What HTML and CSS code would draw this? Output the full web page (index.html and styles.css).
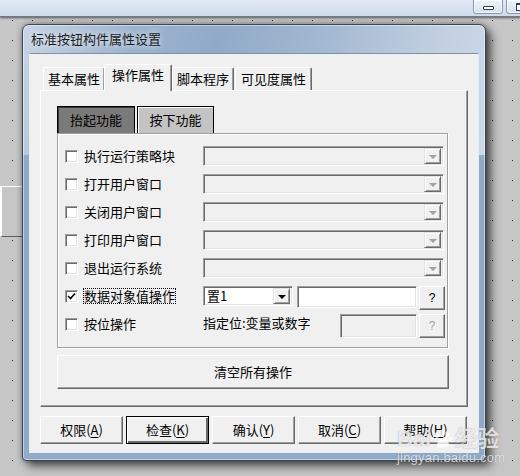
FILE: index.html
```html
<!DOCTYPE html>
<html lang="zh-CN">
<head>
    <meta charset="UTF-8">
    <title>标准按钮构件属性设置</title>
    <link rel="stylesheet" href="styles.css">
</head>
<body>
    <div class="appbar">
        <div class="capbtn"><span class="glyph-min"></span></div>
        <div class="capbtn"><span class="glyph-max"></span></div>
    </div>

    <div class="desk">
        <div class="ghost"></div>

        <div class="dialog">
            <div class="titlebar">标准按钮构件属性设置</div>
            <div class="client">
                <div class="tabs">
                    <div class="tab t1">基本属性</div>
                    <div class="tab t2 active">操作属性</div>
                    <div class="tab t3">脚本程序</div>
                    <div class="tab t4">可见度属性</div>
                </div>

                <div class="page">
                    <div class="subtabs">
                        <div class="subtab pressed">抬起功能</div>
                        <div class="subtab">按下功能</div>
                    </div>

                    <div class="group">
                        <div class="row">
                            <label class="check"><span class="box"></span>执行运行策略块</label>
                            <div class="combo off"><span class="arrow"></span></div>
                        </div>
                        <div class="row">
                            <label class="check"><span class="box"></span>打开用户窗口</label>
                            <div class="combo off"><span class="arrow"></span></div>
                        </div>
                        <div class="row">
                            <label class="check"><span class="box"></span>关闭用户窗口</label>
                            <div class="combo off"><span class="arrow"></span></div>
                        </div>
                        <div class="row">
                            <label class="check"><span class="box"></span>打印用户窗口</label>
                            <div class="combo off"><span class="arrow"></span></div>
                        </div>
                        <div class="row">
                            <label class="check"><span class="box"></span>退出运行系统</label>
                            <div class="combo off"><span class="arrow"></span></div>
                        </div>
                        <div class="row">
                            <label class="check">
                                <span class="box">
                                    <svg width="9" height="9" viewBox="0 0 9 9"><polyline points="1,4 3.5,6.5 8,1.5" fill="none" stroke="#000" stroke-width="1.7"/></svg>
                                </span>
                                <span class="focus">数据对象值操作</span>
                            </label>
                            <div class="combo value"><span class="val">置1</span><span class="arrow on"></span></div>
                            <div class="field"></div>
                            <div class="qbtn">?</div>
                        </div>
                        <div class="row">
                            <label class="check"><span class="box"></span>按位操作</label>
                            <span class="hint">指定位:变量或数字</span>
                            <div class="field dim"></div>
                            <div class="qbtn dim">?</div>
                        </div>
                    </div>

                    <button class="wide">清空所有操作</button>
                </div>

                <div class="actions">
                    <button>权限(<u>A</u>)</button>
                    <button class="default">检查(<u>K</u>)</button>
                    <button>确认(<u>Y</u>)</button>
                    <button>取消(<u>C</u>)</button>
                    <button>帮助(<u>H</u>)</button>
                </div>
            </div>
        </div>

        <div class="watermark">
            <div class="wm-logo">Bai<svg width="22" height="20" viewBox="0 0 22 20"><ellipse cx="5" cy="6" rx="2.2" ry="3" fill="currentColor"/><ellipse cx="10" cy="3.5" rx="2.2" ry="3" fill="currentColor"/><ellipse cx="15.5" cy="5" rx="2.2" ry="3" fill="currentColor"/><ellipse cx="18.5" cy="10" rx="2" ry="2.6" fill="currentColor"/><path d="M5 17 C5 11 9 9 11 9 C14 9 17 12 17 16 C17 19 13 18.5 11 18.5 C8 18.5 5 19.5 5 17 Z" fill="currentColor"/></svg>经验</div>
            <div class="wm-url">jingyan.baidu.com</div>
        </div>
    </div>
</body>
</html>
```

FILE: styles.css
```css
* {
    margin: 0;
    padding: 0;
    box-sizing: border-box;
}

body {
    width: 520px;
    height: 476px;
    overflow: hidden;
    background: #c6c6c6;
    font-family: "Noto Sans CJK SC", "Liberation Sans", sans-serif;
    font-size: 13px;
    color: #000;
}

/* parent window strip */
.appbar {
    position: relative;
    z-index: 2;
    height: 17px;
    display: flex;
    gap: 3px;
    padding-left: 473px;
    background: linear-gradient(#e2ebf6, #cedbea);
    border-bottom: 1px solid #6f7a86;
    box-shadow: 0 1px 2px rgba(0, 0, 0, 0.55);
}

.capbtn {
    flex-shrink: 0;
    width: 30px;
    height: 15px;
    margin-top: -1px;
    border: 1px solid #8596ab;
    border-radius: 0 0 3px 3px;
    background: linear-gradient(#eef4fa, #d5e1ee);
    box-shadow: inset 0 0 0 1px rgba(255, 255, 255, 0.75);
}

.glyph-min {
    display: block;
    width: 11px;
    height: 4px;
    margin: 6px 0 0 9px;
    border: 1px solid #333d49;
    border-radius: 1px;
    background: #fff;
}

.glyph-max {
    display: block;
    width: 10px;
    height: 8px;
    margin: 3px 0 0 9px;
    border: 1px solid #333d49;
    border-top-width: 2px;
    background: #fff;
}

/* desktop canvas with grid dots */
.desk {
    position: relative;
    height: 459px;
    background-color: #c6c6c6;
    background-image: radial-gradient(circle at 2.5px 10.5px, #2a2a2a 0.7px, transparent 1px);
    background-size: 20px 20px;
    background-position: 10px -7px;
}

.ghost {
    position: absolute;
    left: 0;
    top: 169px;
    width: 22px;
    height: 51px;
    border-top: 1px solid #fff;
    border-left: 2px solid #fff;
    border-bottom: 1px solid #5c5c5c;
    background: #c6c6c6;
}

/* dialog window */
.dialog {
    position: absolute;
    left: 22px;
    top: 7px;
    width: 464px;
    height: 437px;
    display: flex;
    flex-direction: column;
    border: 1px solid #39475a;
    border-radius: 7px 7px 4px 4px;
    background:
        linear-gradient(105deg, rgba(255, 255, 255, 0.5) 0%, rgba(255, 255, 255, 0.12) 22%, rgba(255, 255, 255, 0) 40%, rgba(255, 255, 255, 0.18) 62%, rgba(255, 255, 255, 0.45) 85%, rgba(255, 255, 255, 0.55) 100%) top / 100% 130px no-repeat,
        #90aac8;
    box-shadow: inset 0 0 0 1px rgba(255, 255, 255, 0.45), 0 0 6px rgba(0, 0, 0, 0.35), 5px 5px 10px rgba(0, 0, 0, 0.6);
}

.titlebar {
    height: 28px;
    padding: 6px 0 0 8px;
    font-size: 13px;
    line-height: 16px;
    color: #1b1b1b;
    text-shadow: 0 0 6px rgba(255, 255, 255, 0.9);
}

.client {
    height: 400px;
    margin: 0 6px 7px 6px;
    border: 1px solid;
    border-color: #7f91a7 #e6edf5 #e6edf5 #e6edf5;
    background: #f0f0f0;
}

/* tab strip */
.tabs {
    display: flex;
    align-items: flex-end;
    height: 26px;
    margin-top: 10px;
    padding-left: 13px;
}

.tab {
    height: 23px;
    padding-top: 3px;
    text-align: center;
    line-height: 16px;
    background: #f0f0f0;
    border-top: 1px solid #fff;
    border-left: 1px solid #fff;
    border-right: 1px solid #696969;
    border-radius: 2px 2px 0 0;
    box-shadow: inset -1px 0 0 #a0a0a0;
}

.t1 { width: 62px; }
.t2 { width: 68px; margin-left: -1px; }
.t3 { width: 62px; }
.t4 { width: 77px; margin-left: 1px; }

.tab.active {
    position: relative;
    z-index: 1;
    height: 27px;
    margin-bottom: -1px;
    padding-top: 2px;
}

.page {
    width: 428px;
    height: 317px;
    margin-left: 10px;
    padding: 15px 0 0 16px;
    border-top: 1px solid #fff;
    border-left: 1px solid #fff;
    border-right: 1px solid #696969;
    border-bottom: 1px solid #696969;
    box-shadow: inset -1px -1px 0 #a0a0a0;
}

/* up / down sub-tabs */
.subtabs {
    display: flex;
    gap: 2px;
    height: 27px;
}

.subtab {
    width: 77px;
    padding-top: 4px;
    text-align: center;
    line-height: 17px;
    background: #c3c3c3;
    border: 1px solid #000;
    border-bottom: none;
    box-shadow: inset 1px 1px 0 #fff;
}

.subtab.pressed {
    width: 78px;
    background: #7a7a7a;
    box-shadow: inset 1px 1px 0 #3a3a3a;
}

.group {
    width: 391px;
    height: 215px;
    padding: 12px 0 0 7px;
    border: 1px solid #a0a0a0;
    box-shadow: inset 1px 1px 0 #fff, 1px 1px 0 #fff;
}

.row {
    display: flex;
    align-items: flex-start;
    height: 28px;
}

.check {
    display: flex;
    align-items: center;
    gap: 6px;
    width: 138px;
    height: 20px;
    line-height: 16px;
    white-space: nowrap;
}

.box {
    display: flex;
    align-items: center;
    justify-content: center;
    flex-shrink: 0;
    width: 13px;
    height: 13px;
    background: #fff;
    border-top: 1px solid #a0a0a0;
    border-left: 1px solid #a0a0a0;
    border-right: 1px solid #fff;
    border-bottom: 1px solid #fff;
    box-shadow: inset 1px 1px 0 #696969, inset -1px -1px 0 #e3e3e3;
}

.focus {
    margin-left: -1px;
    padding: 0 1px;
    outline: 1px dotted #000;
    outline-offset: -1px;
}

/* sunken fields */
.combo,
.field {
    display: flex;
    align-items: center;
    height: 20px;
    padding: 2px;
    border-top: 1px solid #a0a0a0;
    border-left: 1px solid #a0a0a0;
    border-right: 1px solid #fff;
    border-bottom: 1px solid #fff;
    box-shadow: inset 1px 1px 0 #696969, inset -1px -1px 0 #e3e3e3;
}

.combo.off {
    width: 241px;
    background: #f0f0f0;
}

.combo.value {
    width: 90px;
    margin-right: 4px;
    background: #fff;
}

.val {
    flex: 1;
    padding-left: 1px;
    line-height: 16px;
}

.arrow {
    display: flex;
    align-items: center;
    justify-content: center;
    width: 17px;
    height: 16px;
    margin-left: auto;
    padding-top: 2px;
    background: #f0f0f0;
    border-top: 1px solid #e3e3e3;
    border-left: 1px solid #e3e3e3;
    border-right: 1px solid #696969;
    border-bottom: 1px solid #696969;
    box-shadow: inset 1px 1px 0 #fff, inset -1px -1px 0 #a0a0a0;
}

.arrow::after {
    content: "";
    border-top: 4px solid #a0a0a0;
    border-left: 4px solid transparent;
    border-right: 4px solid transparent;
}

.arrow.on::after {
    border-top-color: #000;
}

.field {
    width: 120px;
    height: 22px;
    background: #fff;
}

.field.dim {
    width: 77px;
    height: 24px;
    background: #f0f0f0;
}

.hint {
    width: 137px;
    height: 20px;
    line-height: 18px;
    white-space: nowrap;
}

.qbtn {
    width: 26px;
    height: 24px;
    margin-left: 2px;
    font-family: "Liberation Sans", sans-serif;
    font-size: 12px;
    line-height: 22px;
    text-align: center;
    background: #f0f0f0;
    border-top: 1px solid #fff;
    border-left: 1px solid #fff;
    border-right: 1px solid #696969;
    border-bottom: 1px solid #696969;
    box-shadow: inset -1px -1px 0 #a0a0a0;
}

.qbtn.dim {
    color: #a0a0a0;
    text-shadow: 1px 1px 0 #fff;
}

/* raised push buttons */
button {
    font-family: inherit;
    font-size: 13px;
    color: #000;
    line-height: 16px;
    background: #f0f0f0;
    border-top: 1px solid #fff;
    border-left: 1px solid #fff;
    border-right: 1px solid #696969;
    border-bottom: 1px solid #696969;
    box-shadow: inset -1px -1px 0 #a0a0a0;
}

.wide {
    display: block;
    width: 392px;
    height: 34px;
    margin-top: 7px;
}

.actions {
    display: flex;
    gap: 3px;
    margin: 9px 0 0 10px;
}

.actions button {
    width: 83px;
    height: 28px;
}

.actions u {
    text-underline-offset: 2px;
}

.actions .default {
    border: 1px solid #000;
    box-shadow: inset 1px 1px 0 #fff, inset -2px -2px 0 #696969;
}

/* site watermark */
.watermark {
    position: absolute;
    left: 397px;
    top: 409px;
    color: rgba(255, 255, 255, 0.78);
    text-shadow: 0 0 1px rgba(0, 0, 0, 0.35);
}

.wm-logo {
    display: flex;
    align-items: center;
    height: 26px;
    font-family: "Liberation Sans", "Noto Sans CJK SC", sans-serif;
    font-size: 22px;
    font-weight: bold;
    line-height: 26px;
}

.wm-logo svg {
    margin: 0 1px;
}

.wm-url {
    margin-top: -1px;
    font-family: "Liberation Sans", sans-serif;
    font-size: 13px;
    line-height: 14px;
    letter-spacing: 0.2px;
}
```
